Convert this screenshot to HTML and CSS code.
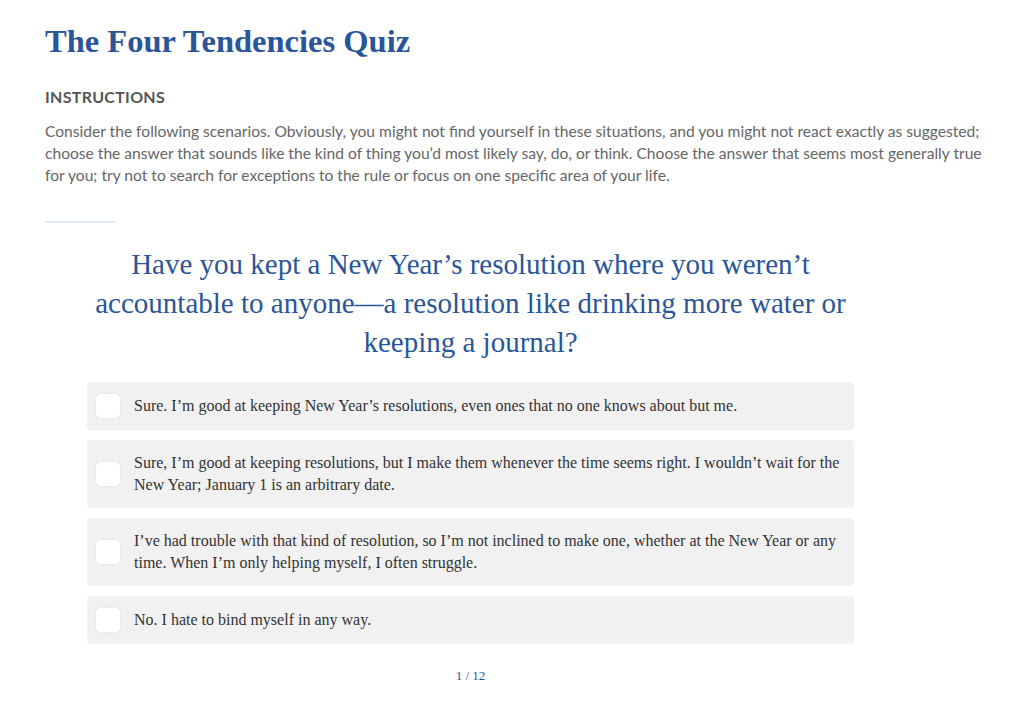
FILE: index.html
```html
<!DOCTYPE html>
<html lang="en">
<head>
  <meta charset="UTF-8" />
  <meta name="viewport" content="width=device-width, initial-scale=1.0"/>
  <title>The Four Tendencies Quiz</title>
  <link rel="stylesheet" href="styles.css">
</head>

<body>
  <div class="page">
    <h1 class="page-title">The Four Tendencies Quiz</h1>

    <!-- Instruções -->
    <h2 class="instructions-title">INSTRUCTIONS</h2>
    <p class="instructions">Consider the following scenarios. Obviously, you might not find yourself in these situations, and you might not react exactly as suggested; choose the answer that sounds like the kind of thing you’d most likely say, do, or think. Choose the answer that seems most generally true for you; try not to search for exceptions to the rule or focus on one specific area of your life.</p>

    <div class="divider"></div>

    <!-- Pergunta atual -->
    <div class="quiz">
      <h3 class="question">Have you kept a New Year’s resolution where you weren’t accountable to anyone—a resolution like drinking more water or keeping a journal?</h3>

      <ul class="answers">
        <li class="answer">
          <span class="check"></span>
          <span class="answer-text">Sure. I’m good at keeping New Year’s resolutions, even ones that no one knows about but me.</span>
        </li>
        <li class="answer">
          <span class="check"></span>
          <span class="answer-text">Sure, I’m good at keeping resolutions, but I make them whenever the time seems right. I wouldn’t wait for the New Year; January 1 is an arbitrary date.</span>
        </li>
        <li class="answer">
          <span class="check"></span>
          <span class="answer-text">I’ve had trouble with that kind of resolution, so I’m not inclined to make one, whether at the New Year or any time. When I’m only helping myself, I often struggle.</span>
        </li>
        <li class="answer">
          <span class="check"></span>
          <span class="answer-text">No. I hate to bind myself in any way.</span>
        </li>
      </ul>

      <div class="progress">1 / 12</div>
    </div>
  </div>
</body>
</html>
```

FILE: styles.css
```css
/* Paleta:
  - Azul dos titulos: #2a5699
  - Texto cinza: #666
  - Fundo das respostas: #f1f1f1
*/

body {
  margin: 0;
  padding: 0;
  background: #fff;
  font-family: Lato, "Open Sans", sans-serif;
}

.page {
  padding: 22px 36px 0 45px;
}

/* Titulo principal */
.page-title {
  margin: 0;
  font-family: "Liberation Serif", serif;
  font-size: 32.5px;
  font-weight: bold;
  color: #2a5699;
  line-height: 38px;
}

/* Instrucoes */
.instructions-title {
  margin: 26px 0 0;
  font-size: 16px;
  font-weight: bold;
  color: #555;
  letter-spacing: 0.3px;
  line-height: 22px;
}

.instructions {
  margin: 12px 0 0;
  font-size: 15.6px;
  line-height: 22px;
  color: #666;
}

.divider {
  width: 70px;
  height: 2px;
  margin-top: 35px;
  background: #e3edf8;
}

/* Bloco da pergunta */
.quiz {
  width: 767px;
  margin: 22px 0 0 42px;
}

.question {
  margin: 0 0 20px;
  font-family: "Liberation Serif", serif;
  font-size: 29px;
  font-weight: normal;
  line-height: 39px;
  color: #2a5699;
  text-align: center;
}

.answers {
  margin: 0;
  padding: 0;
  list-style: none;
}

.answer {
  display: flex;
  align-items: center;
  gap: 14px;
  margin-bottom: 10px;
  padding: 12px 6px 12px 9px;
  background: #f1f1f1;
  border-radius: 4px;
}

.check {
  flex: none;
  width: 24px;
  height: 24px;
  background: #fff;
  border-radius: 4px;
  box-shadow: 0 0 1px rgba(0, 0, 0, 0.25);
}

.answer-text {
  font-family: "Liberation Serif", serif;
  font-size: 16px;
  line-height: 22px;
  color: #333;
}

.progress {
  margin-top: 24px;
  font-family: "Liberation Serif", serif;
  font-size: 13px;
  color: #2a5699;
  text-align: center;
}
```
